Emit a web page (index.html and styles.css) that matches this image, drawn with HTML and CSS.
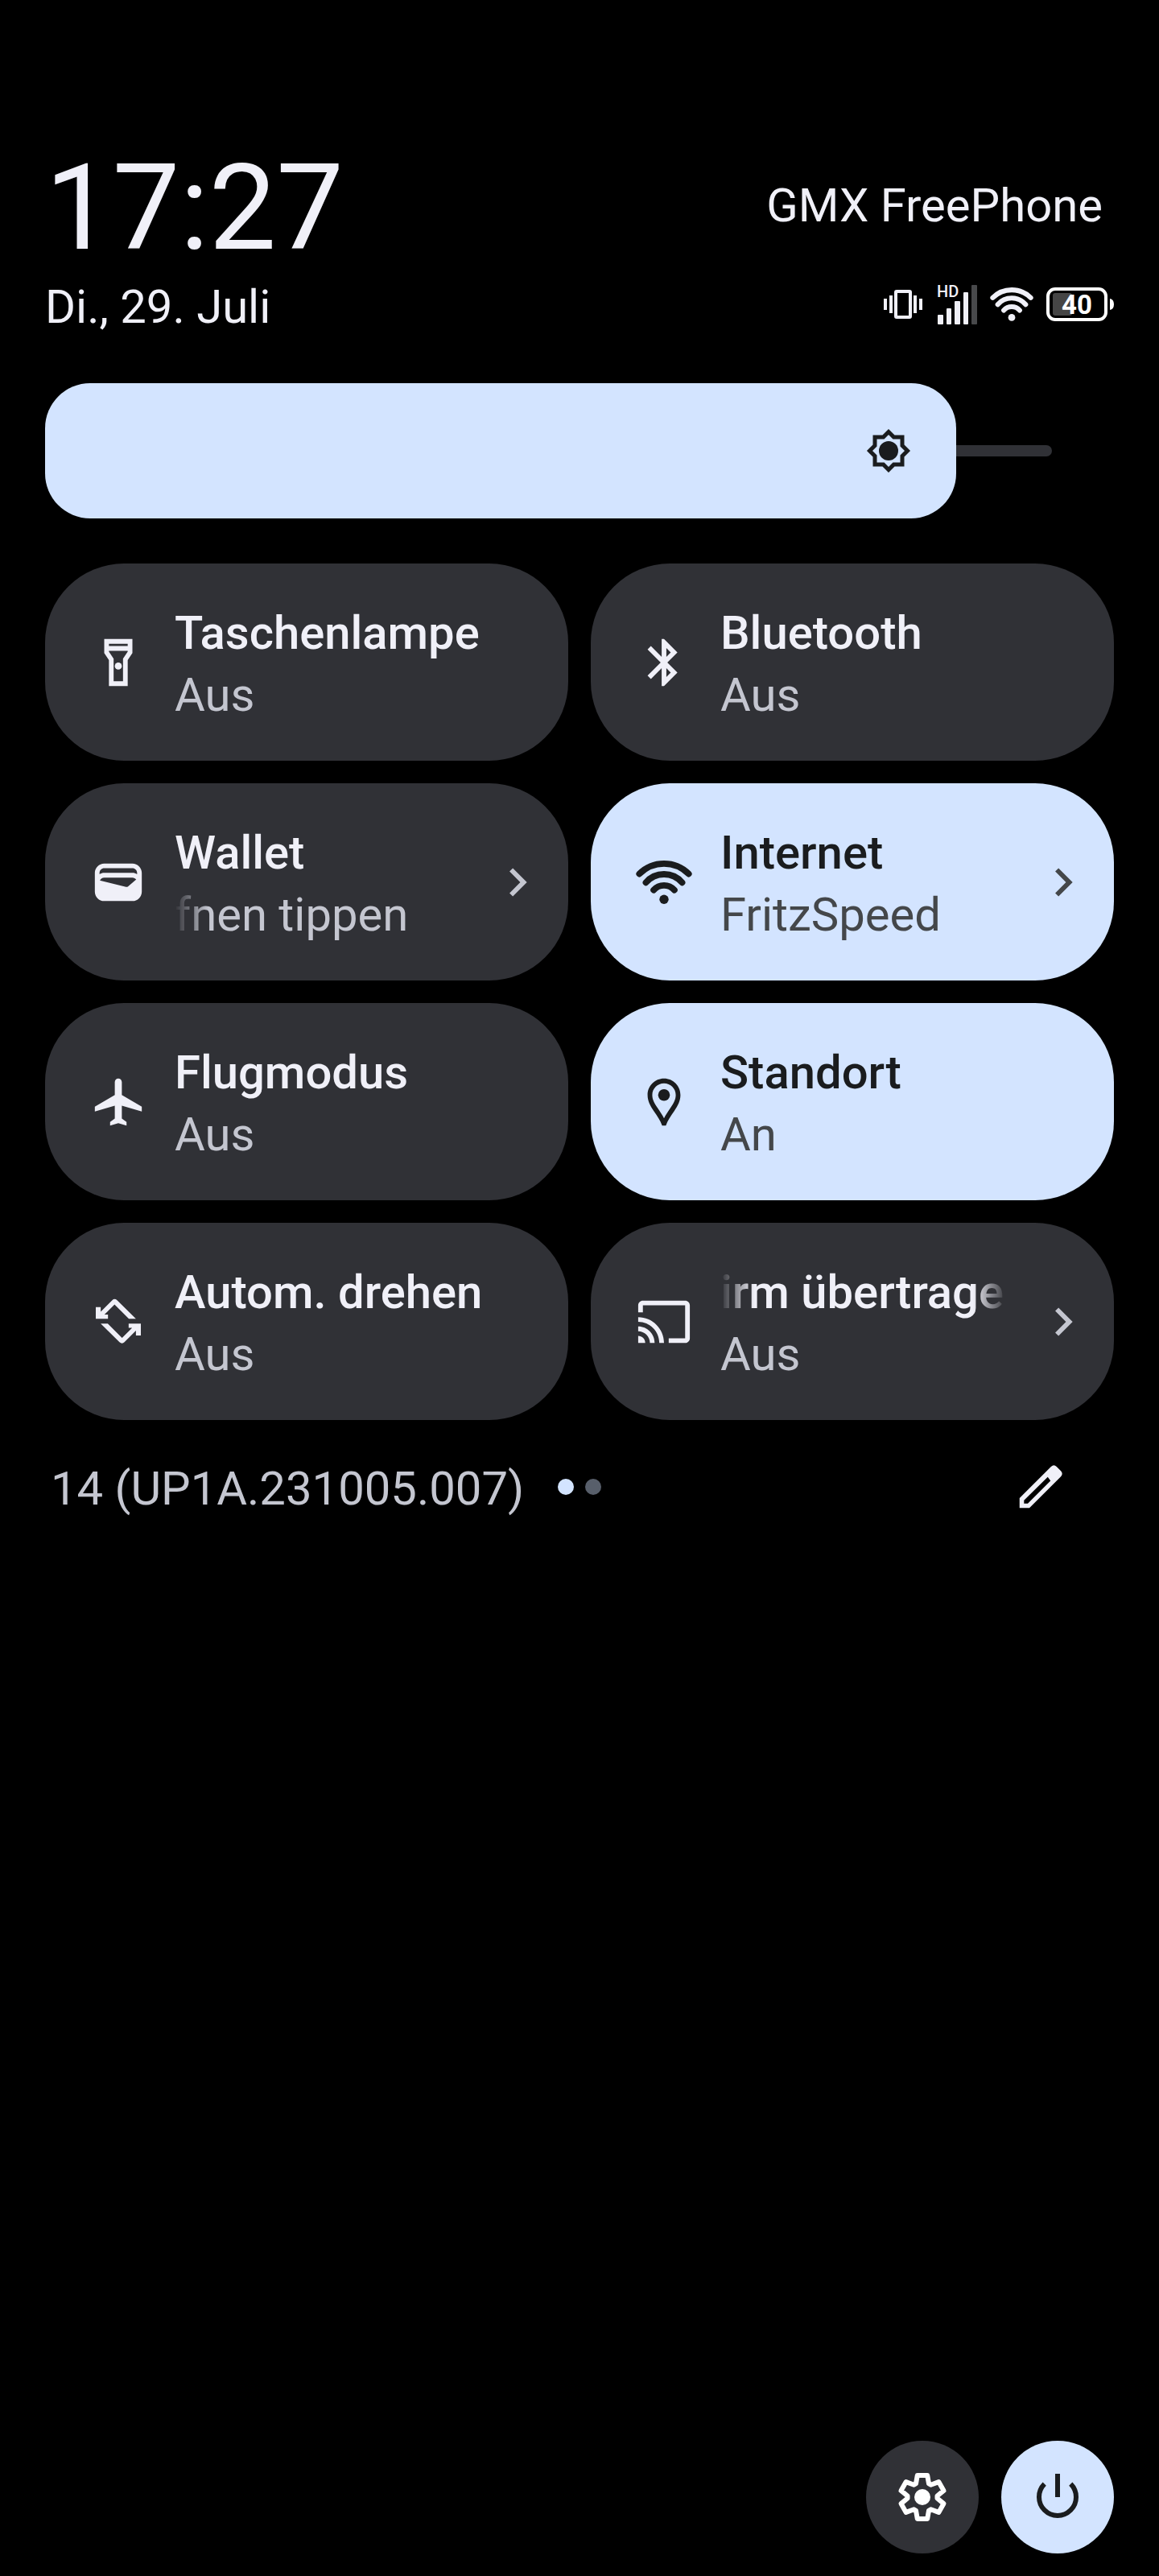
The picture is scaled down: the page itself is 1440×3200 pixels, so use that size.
FILE: index.html
```html
<!DOCTYPE html>
<html lang="de">

<head>
    <meta charset="UTF-8">
    <meta name="viewport" content="width=device-width, initial-scale=1.0">
    <title>Schnelleinstellungen</title>
    <link rel="stylesheet" href="styles.css">
</head>

<body>
    <header>
        <div class="header-row">
            <time class="clock" datetime="17:27">17:27</time>
            <span class="carrier">GMX FreePhone</span>
        </div>
        <div class="header-row">
            <span class="date">Di., 29. Juli</span>
            <div class="status-icons">
                <svg width="50" height="36" viewBox="0 0 50 36" fill="currentColor">
                    <rect x="0" y="11" width="4" height="14" />
                    <rect x="7" y="7" width="4" height="22" />
                    <rect x="15" y="2" width="18" height="32" rx="1" fill="none" stroke="currentColor" stroke-width="4" />
                    <rect x="37" y="7" width="4" height="22" />
                    <rect x="44" y="11" width="4" height="14" />
                </svg>
                <svg width="50" height="50" viewBox="0 0 50 50" fill="currentColor">
                    <text class="hd" x="0" y="16">HD</text>
                    <rect x="1" y="38" width="7" height="12" rx="1" />
                    <rect x="12" y="30" width="6" height="20" rx="1" />
                    <rect x="22" y="21" width="7" height="29" rx="1" />
                    <rect x="33" y="10" width="6" height="40" rx="1" />
                    <rect x="43" y="1" width="7" height="49" rx="1" fill="#48494b" />
                </svg>
                <svg width="54" height="54" viewBox="0 0 24 24" fill="none" stroke="currentColor" stroke-width="2.7" stroke-linecap="round">
                    <path d="M1.5 8.4a14.85 14.85 0 0 1 21 0M4.3 12.1a10.2 10.2 0 0 1 15.4 0M7.6 15.3a5.9 5.9 0 0 1 8.8 0" />
                    <circle cx="12" cy="19.3" r="1.95" fill="currentColor" stroke="none" />
                </svg>
                <svg width="84" height="42" viewBox="0 0 84 42" fill="#fff">
                    <rect x="2" y="2" width="72" height="38" rx="9" fill="none" stroke="#fff" stroke-width="4" />
                    <rect x="8" y="7" width="24" height="28" rx="3" fill="#454545" />
                    <path d="M79 14q5 1 5 7t-5 7z" />
                    <text class="battery-level" x="19" y="33">40</text>
                </svg>
            </div>
        </div>
    </header>

    <div class="brightness">
        <input type="range" id="brightness" min="0" max="100" value="90" aria-label="Helligkeit">
        <div class="brightness-fill" style="width: 90.5%">
            <svg width="70" height="70" viewBox="-35 -35 70 70">
                <path d="M0-23.5L6.5-17H17V-6.5L23.5 0 17 6.5V17H6.5L0 23.5-6.5 17H-17V6.5L-23.5 0-17-6.5V-17H-6.5z" fill="none" stroke="currentColor" stroke-width="5" />
                <circle r="12" fill="currentColor" />
            </svg>
        </div>
    </div>

    <main class="tiles">
        <button class="tile">
            <svg class="icon" viewBox="0 0 24 24">
                <path fill-rule="evenodd" d="M18 2H6v6l2 3v11h8V11l2-3zM16 4v1H8V4zM14 10.4V20h-4v-9.6L8 7.4V7h8v.4z" />
                <circle cx="12" cy="13.5" r="1.5" />
            </svg>
            <span class="label">
                <span class="title">Taschenlampe</span>
                <span class="state">Aus</span>
            </span>
        </button>

        <button class="tile">
            <svg class="icon" viewBox="0 0 24 24">
                <path d="M17.71 7.71L12 2h-1v7.59L6.41 5 5 6.41 10.59 12 5 17.59 6.41 19 11 14.41V22h1l5.71-5.71-4.3-4.29 4.3-4.29zM13 5.83l1.88 1.88L13 9.59V5.83zm1.88 10.46L13 18.17v-3.76l1.88 1.88z" />
            </svg>
            <span class="label">
                <span class="title">Bluetooth</span>
                <span class="state">Aus</span>
            </span>
        </button>

        <button class="tile">
            <svg class="icon" viewBox="0 0 24 24">
                <path d="M18 4H6C3.79 4 2 5.79 2 8v8c0 2.21 1.79 4 4 4h12c2.21 0 4-1.79 4-4V8c0-2.21-1.79-4-4-4zm-1.86 9.77c-.24.2-.57.28-.88.2L4.15 11.25C4.45 10.52 5.16 10 6 10h12c.67 0 1.26.34 1.63.84l-3.49 2.93zM6 6h12c1.1 0 2 .9 2 2v.55c-.59-.34-1.27-.55-2-.55H6c-.73 0-1.41.21-2 .55V8c0-1.1.9-2 2-2z" />
            </svg>
            <span class="label">
                <span class="title">Wallet</span>
                <span class="state fade-left">fnen tippen</span>
            </span>
            <svg class="icon chevron" viewBox="0 0 24 24">
                <path d="M10 6L8.59 7.41 13.17 12l-4.58 4.59L10 18l6-6z" />
            </svg>
        </button>

        <button class="tile active">
            <svg class="icon" viewBox="0 0 24 24">
                <path d="M1.5 8.4a14.85 14.85 0 0 1 21 0M4.3 12.1a10.2 10.2 0 0 1 15.4 0M7.6 15.3a5.9 5.9 0 0 1 8.8 0" fill="none" stroke="currentColor" stroke-width="2.7" stroke-linecap="round" />
                <circle cx="12" cy="19.3" r="1.95" />
            </svg>
            <span class="label">
                <span class="title">Internet</span>
                <span class="state">FritzSpeed</span>
            </span>
            <svg class="icon chevron" viewBox="0 0 24 24">
                <path d="M10 6L8.59 7.41 13.17 12l-4.58 4.59L10 18l6-6z" />
            </svg>
        </button>

        <button class="tile">
            <svg class="icon" viewBox="0 0 24 24">
                <path d="M22 16v-2l-8.5-5V3.5C13.5 2.67 12.83 2 12 2s-1.5.67-1.5 1.5V9L2 14v2l8.5-2.5V19l-2 1.5V22l3.5-1 3.5 1v-1.5l-2-1.5v-5.5L22 16z" />
            </svg>
            <span class="label">
                <span class="title">Flugmodus</span>
                <span class="state">Aus</span>
            </span>
        </button>

        <button class="tile active">
            <svg class="icon" viewBox="0 0 24 24">
                <path fill-rule="evenodd" d="M12 2C8.1 2 5 5.1 5 9c0 2.6 1.1 4.5 2.6 6.8 1.6 2.3 2.8 4 3.6 6.2h1.6c.8-2.2 2-3.9 3.6-6.2C17.9 13.5 19 11.6 19 9c0-3.9-3.1-7-7-7zM12 4c2.8 0 5 2.2 5 5 0 2-.9 3.5-2.3 5.6-1 1.5-2 2.9-2.7 4.3-.7-1.4-1.7-2.8-2.7-4.3C7.9 12.5 7 11 7 9c0-2.8 2.2-5 5-5z" />
                <circle cx="12" cy="9" r="2.5" />
            </svg>
            <span class="label">
                <span class="title">Standort</span>
                <span class="state">An</span>
            </span>
        </button>

        <button class="tile">
            <svg class="icon" viewBox="0 0 24 24">
                <path d="M2.4 5.7h2.1v2l4.9-4.9q1-1 2.1 0l8 7.9h-3l-6.1-6.1L6.1 8.9h1.5v1.85H2.4z" />
                <path transform="rotate(180 12 11.75)" d="M2.4 5.7h2.1v2l4.9-4.9q1-1 2.1 0l8 7.9h-3l-6.1-6.1L6.1 8.9h1.5v1.85H2.4z" />
            </svg>
            <span class="label">
                <span class="title">Autom. drehen</span>
                <span class="state">Aus</span>
            </span>
        </button>

        <button class="tile">
            <svg class="icon" viewBox="0 0 24 24">
                <path d="M21 3H3c-1.1 0-2 .9-2 2v3h2V5h18v14h-7v2h7c1.1 0 2-.9 2-2V5c0-1.1-.9-2-2-2zM1 18v3h3c0-1.66-1.34-3-3-3zm0-4v2c2.76 0 5 2.24 5 5h2c0-3.87-3.13-7-7-7zm0-4v2c4.97 0 9 4.03 9 9h2c0-6.08-4.93-11-11-11z" />
            </svg>
            <span class="label">
                <span class="title fade-both">irm übertrage</span>
                <span class="state">Aus</span>
            </span>
            <svg class="icon chevron" viewBox="0 0 24 24">
                <path d="M10 6L8.59 7.41 13.17 12l-4.58 4.59L10 18l6-6z" />
            </svg>
        </button>
    </main>

    <div class="build-row">
        <span class="build">14 (UP1A.231005.007)</span>
        <div class="dots">
            <span class="dot current"></span>
            <span class="dot"></span>
        </div>
        <button class="edit" aria-label="Bearbeiten">
            <svg class="icon" viewBox="0 0 24 24">
                <path fill-rule="evenodd" d="M3 16.8L16.4 3.4q1.2-1.2 2.4 0l1.8 1.8q1.1 1.2 0 2.4L7.2 21H3zM4.9 17.7v1.4h1.6l9.7-9.7L15 7.8z" />
            </svg>
        </button>
    </div>

    <footer>
        <button class="round-btn" aria-label="Einstellungen">
            <svg width="70" height="70" viewBox="-35 -35 70 70">
                <path d="M-8-16.8L-6.2-27H6.2L8-16.8 10.5-15.3 20.3-18.9 26.5-8.1 18.5-1.5V1.5L26.5 8.1 20.3 18.9 10.5 15.3 8 16.8 6.2 27H-6.2L-8 16.8-10.5 15.3-20.3 18.9-26.5 8.1-18.5 1.5V-1.5L-26.5-8.1-20.3-18.9-10.5-15.3z" fill="none" stroke="currentColor" stroke-width="6" stroke-linejoin="round" />
                <circle r="10" fill="currentColor" />
            </svg>
        </button>
        <button class="round-btn active" aria-label="Ein/Aus">
            <svg width="70" height="70" viewBox="-35 -35 70 70" fill="none" stroke="currentColor" stroke-width="6">
                <path d="M0-29V0M-16.3-16.3A23 23 0 1 0 16.3-16.3" />
            </svg>
        </button>
    </footer>
</body>

</html>
```
FILE: styles.css
```css
* {
    box-sizing: border-box;
}

body {
    display: flex;
    flex-direction: column;
    min-height: 100vh;
    margin: 0;
    padding: 172px 56px 28px;
    background-color: #000;
    color: #f0f0f8;
    font-family: Roboto, sans-serif;
    font-size: 58px;
    line-height: 68px;
}

button {
    border: none;
    padding: 0;
    background: none;
    color: inherit;
    font: inherit;
    text-align: left;
    cursor: pointer;
}

svg {
    display: block;
    flex-shrink: 0;
}

.header-row {
    display: flex;
    justify-content: space-between;
    align-items: center;
    margin-bottom: 3px;
}

.clock {
    font-size: 149px;
    line-height: 172px;
}

.carrier {
    padding: 0 14px 6px 0;
}

.status-icons {
    display: flex;
    align-items: center;
    gap: 16px;
    height: 54px;
    margin-bottom: 6px;
}

.hd {
    font-size: 20px;
    font-weight: 500;
}

.battery-level {
    font-size: 33px;
    font-weight: 700;
}

.brightness {
    position: relative;
    height: 168px;
    margin: 58px 77px 56px 0;
}

.brightness input {
    appearance: none;
    display: block;
    width: 100%;
    height: 100%;
    margin: 0;
    background: none;
}

.brightness input::-webkit-slider-runnable-track {
    height: 14px;
    border-radius: 7px;
    background-color: #303136;
}

.brightness input::-webkit-slider-thumb {
    appearance: none;
    width: 14px;
    height: 14px;
}

.brightness-fill {
    position: absolute;
    top: 0;
    left: 0;
    display: flex;
    justify-content: flex-end;
    align-items: center;
    height: 100%;
    padding-right: 49px;
    border-radius: 56px;
    background-color: #d3e4ff;
    color: #1a1c1e;
    pointer-events: none;
}

.tiles {
    display: grid;
    grid-template-columns: 1fr 1fr;
    gap: 28px;
}

.tile {
    display: flex;
    align-items: center;
    gap: 35px;
    min-width: 0;
    height: 245px;
    padding: 0 28px 0 56px;
    border-radius: 98px;
    background-color: #303136;
}

.icon {
    width: 70px;
    height: 70px;
    fill: currentColor;
}

.label {
    flex: 1;
    min-width: 0;
    padding-top: 4px;
    line-height: 77px;
    white-space: nowrap;
}

.title,
.state {
    display: block;
    overflow: hidden;
}

.title {
    font-weight: 500;
}

.state,
.chevron {
    color: #c4c6d0;
}

.active {
    background-color: #d3e4ff;
    color: #1a1c1e;
}

.active .state,
.active .chevron {
    color: #44474a;
}

.fade-left {
    mask-image: linear-gradient(to right, transparent, #000 42px);
}

.fade-both {
    mask-image: linear-gradient(to right, transparent, #000 42px, #000 calc(100% - 42px), transparent);
}

.build-row {
    display: grid;
    grid-template-columns: 1fr auto 1fr;
    align-items: center;
    margin-top: 47px;
}

.build {
    padding: 4px 0 0 7px;
    color: #c4c6d0;
    white-space: nowrap;
}

.dots {
    display: flex;
    gap: 14px;
}

.dot {
    width: 20px;
    height: 20px;
    border-radius: 50%;
    background-color: #585f6b;
}

.dot.current {
    background-color: #d3e4ff;
}

.edit {
    justify-self: end;
    margin-right: 56px;
}

footer {
    display: flex;
    justify-content: flex-end;
    gap: 28px;
    margin-top: auto;
}

.round-btn {
    display: flex;
    justify-content: center;
    align-items: center;
    width: 140px;
    height: 140px;
    border-radius: 50%;
    background-color: #303136;
    color: #fff;
}

.round-btn.active {
    background-color: #d3e4ff;
    color: #1a1c1e;
}
```
